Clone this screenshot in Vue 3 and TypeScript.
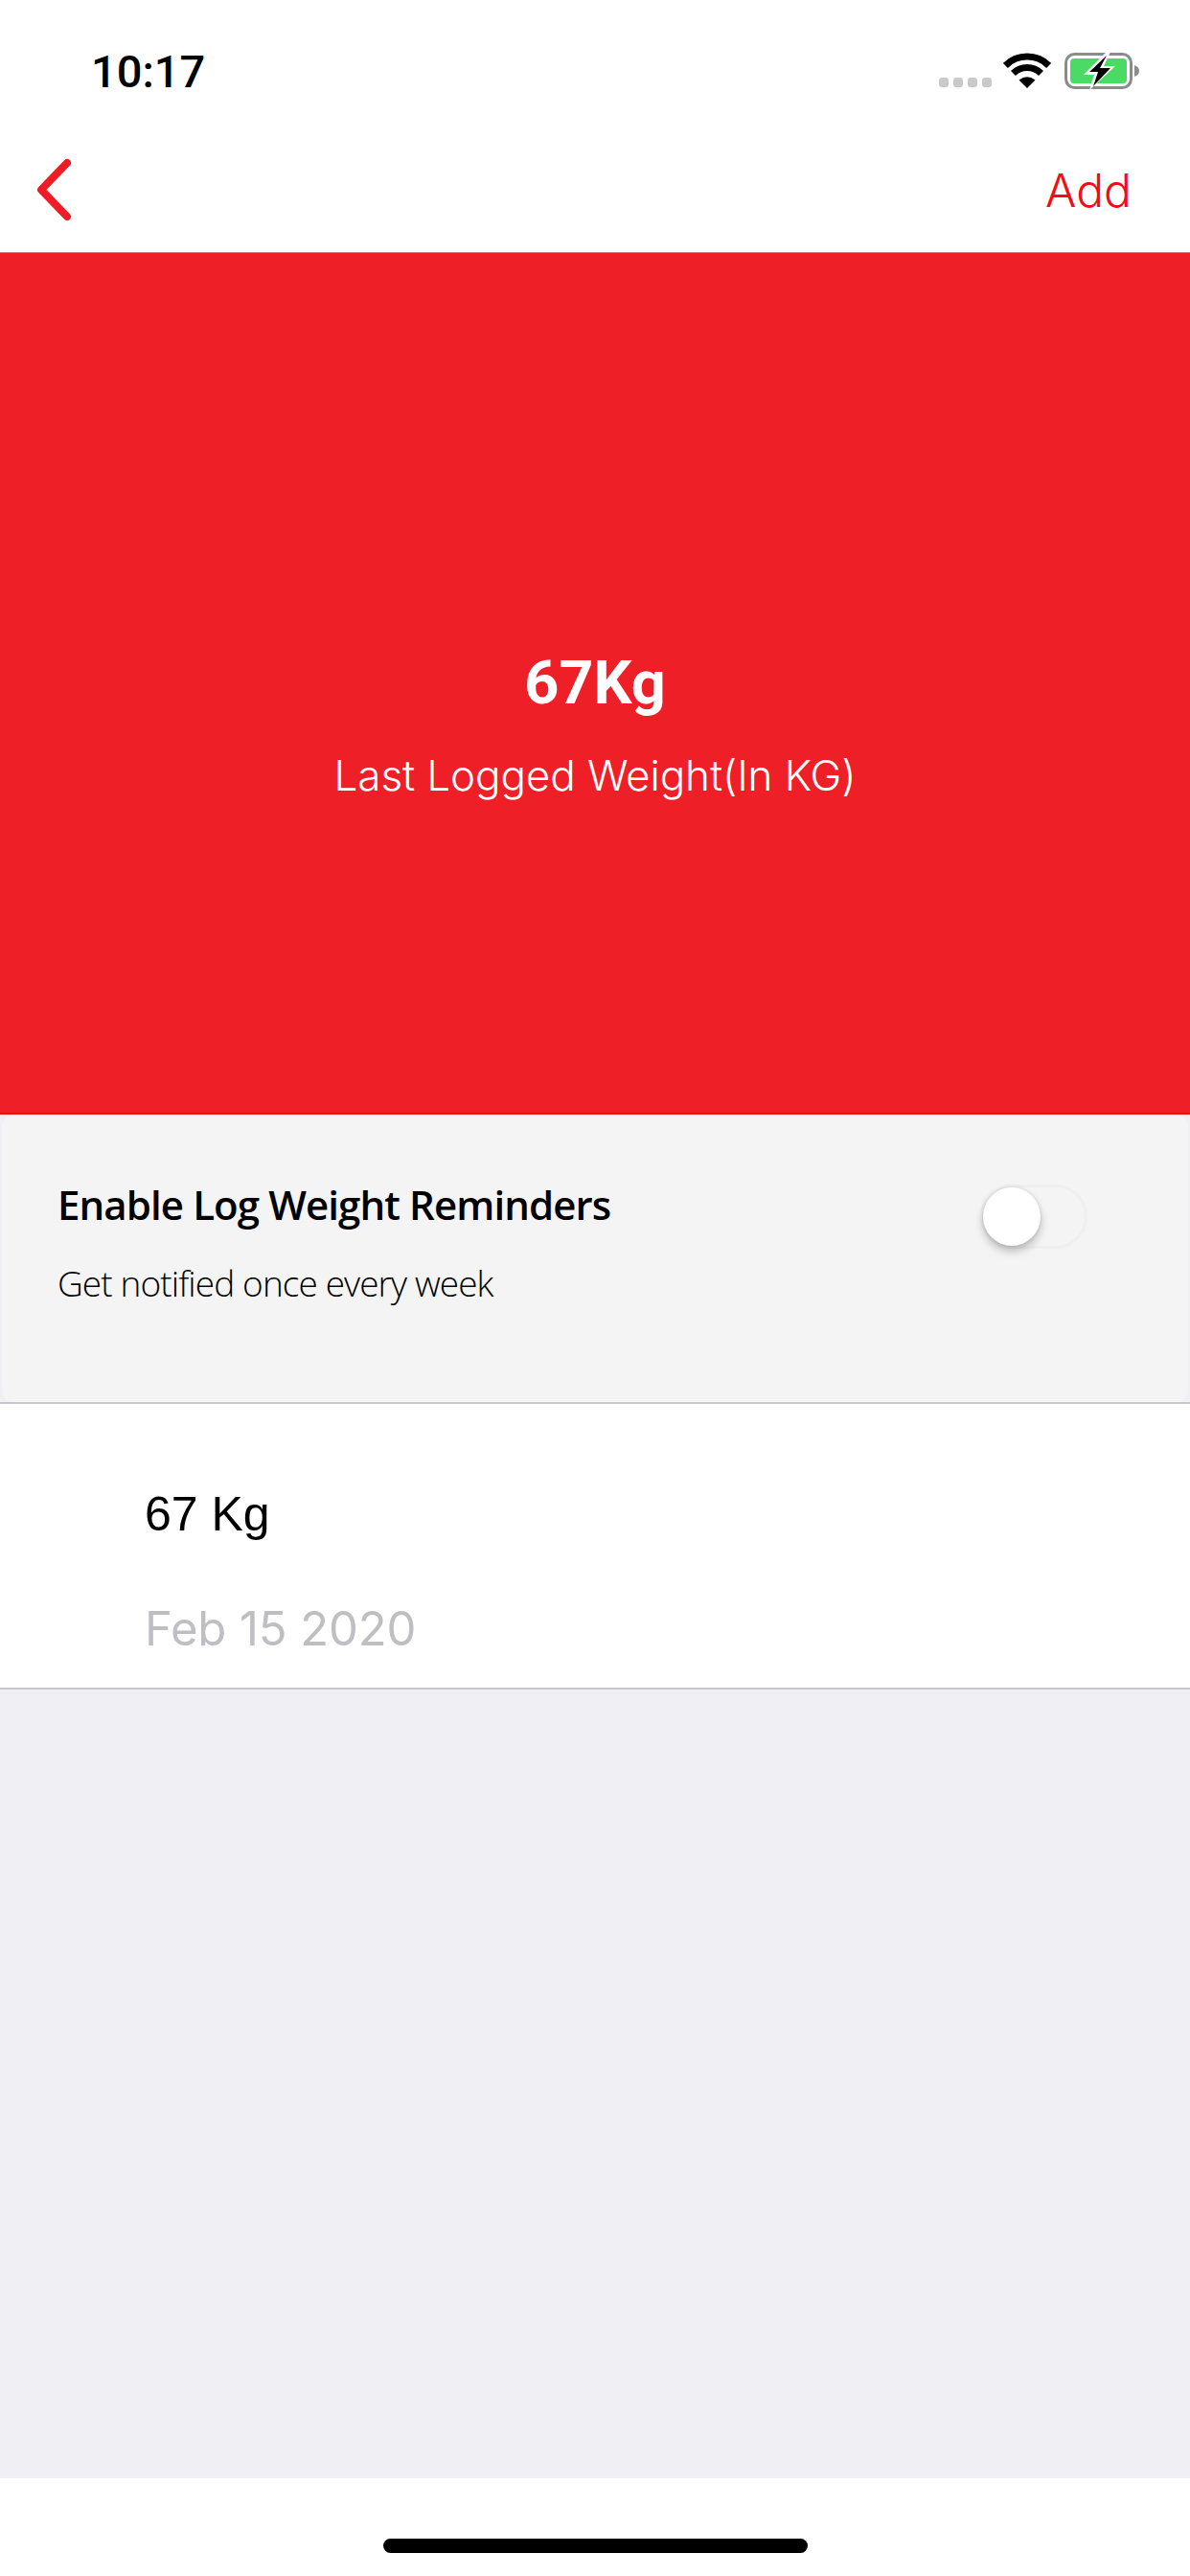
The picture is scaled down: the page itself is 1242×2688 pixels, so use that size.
<script setup lang="ts">
const weight = { value: '67Kg', label: 'Last Logged Weight(In KG)' }
const entries = [{ kg: '67 Kg', date: 'Feb 15 2020' }]
</script>

<template>
  <div class="screen">
    <div class="status">
      <span class="time">10:17</span>
      <div class="status-icons">
        <div class="dots"><i></i><i></i><i></i><i></i></div>
        <svg class="wifi" width="50" height="37" viewBox="0 0 50 37">
          <path d="M2.4 13.4A32 32 0 0 1 47.6 13.4" fill="none" stroke="#000" stroke-width="7" />
          <path d="M10.5 21.5A20.5 20.5 0 0 1 39.5 21.5" fill="none" stroke="#000" stroke-width="7" />
          <path d="M25 37L16.5 28.5Q25 22 33.5 28.5Z" fill="#000" />
        </svg>
        <svg class="battery" width="80" height="38" viewBox="0 0 80 38">
          <rect x="1.5" y="1.5" width="68" height="35" rx="9" fill="#fff" stroke="#8b8b8b" stroke-width="3" />
          <rect x="6" y="6" width="59" height="26" rx="4" fill="#4cd964" />
          <path d="M73 13C76 14 78 16 78 19C78 22 76 24 73 25Z" fill="#8b8b8b" />
          <path d="M44 -1L20 23H31L26 39L53 14H41L48 -1Z" fill="#fff" />
          <path d="M44 3L26 20H35L30 35L48 16H37Z" fill="#000" />
        </svg>
      </div>
    </div>

    <header class="nav">
      <svg class="back" width="40" height="66" viewBox="0 0 40 66">
        <path d="M32 5L5 33L32 61" fill="none" stroke="#ef1c25" stroke-width="8" stroke-linecap="round" stroke-linejoin="round" />
      </svg>
      <span class="add">Add</span>
    </header>

    <section class="hero">
      <div class="hero-value">{{ weight.value }}</div>
      <div class="hero-label">{{ weight.label }}</div>
    </section>

    <main class="content">
      <section class="card">
        <div class="card-text">
          <div class="card-title">Enable Log Weight Reminders</div>
          <div class="card-sub">Get notified once every week</div>
        </div>
        <div class="toggle"><span class="thumb"></span></div>
      </section>

      <div class="list">
        <div v-for="entry in entries" :key="entry.date" class="row">
          <div class="row-kg">{{ entry.kg }}</div>
          <div class="row-date">{{ entry.date }}</div>
        </div>
      </div>
    </main>

    <footer class="home"><span class="home-bar"></span></footer>
  </div>
</template>

<style scoped>
.screen {
  width: 1242px;
  height: 2688px;
  display: flex;
  flex-direction: column;
  background: #fff;
  font-family: Inter, Roboto, "Liberation Sans", sans-serif;
  overflow: hidden;
}
.status {
  height: 132px;
  box-sizing: border-box;
  display: flex;
  justify-content: space-between;
  align-items: flex-start;
  padding: 0 51px 0 95px;
}
.time {
  margin-top: 47px;
  font-family: Roboto, sans-serif;
  font-size: 47px;
  line-height: 56px;
  font-weight: 500;
  color: #000;
}
.status-icons {
  display: flex;
  align-items: flex-end;
  margin-top: 55px;
  height: 38px;
}
.dots {
  display: flex;
  gap: 5px;
  margin-bottom: 2px;
  margin-left: 3px;
}
.dots i {
  width: 10px;
  height: 10px;
  border-radius: 3px;
  background: #c9c9c9;
}
.wifi {
  margin-left: 12px;
  margin-bottom: 1px;
}
.battery {
  margin-left: 14px;
}
.nav {
  height: 132px;
  box-sizing: border-box;
  border-bottom: 1px solid #9c8f8f;
  display: flex;
  align-items: center;
  justify-content: space-between;
  padding: 0 61px 0 38px;
}
.add {
  font-size: 48px;
  line-height: 56px;
  margin-top: 2px;
  font-weight: 300;
  color: #f40b14;
}
.hero {
  height: 899px;
  box-sizing: border-box;
  background: #ef1f27;
  border-bottom: 2px solid #f00d14;
  color: #fff;
  display: flex;
  flex-direction: column;
  align-items: center;
  padding-top: 413px;
}
.hero-value {
  font-family: Roboto, sans-serif;
  font-size: 63px;
  line-height: 72px;
  font-weight: 700;
}
.hero-label {
  margin-top: 35px;
  font-size: 44px;
  line-height: 50px;
  font-weight: 300;
  letter-spacing: -0.1px;
}
.content {
  flex: 1;
  background: #efeff4;
}
.card {
  height: 300px;
  box-sizing: border-box;
  margin: 0 2px;
  padding: 0 0 0 58px;
  background: #f4f4f4;
  border-radius: 12px;
  display: flex;
  justify-content: space-between;
  align-items: flex-start;
}
.card-text {
  padding-top: 69px;
  font-family: "Open Sans", "Noto Sans", sans-serif;
  color: #000;
}
.card-title {
  font-size: 42px;
  line-height: 50px;
  font-weight: 600;
  letter-spacing: -0.9px;
}
.card-sub {
  margin-top: 34px;
  font-size: 37px;
  line-height: 46px;
  font-weight: 300;
  letter-spacing: -0.9px;
}
.toggle {
  position: relative;
  width: 112px;
  height: 67px;
  box-sizing: border-box;
  margin: 73px 105px 0 0;
  border: 3px solid #efefef;
  border-radius: 34px;
}
.thumb {
  position: absolute;
  left: 0;
  top: 0;
  width: 60px;
  height: 61px;
  border-radius: 50%;
  background: #fff;
  box-shadow: 0 6px 10px rgba(0, 0, 0, 0.22), 0 0 4px rgba(0, 0, 0, 0.12);
}
.list {
  border-top: 2px solid #c8c7cc;
  border-bottom: 2px solid #c8c7cc;
  background: #fff;
}
.row {
  height: 296px;
  box-sizing: border-box;
  padding: 0 0 0 151px;
}
.row-kg {
  padding-top: 87px;
  font-family: "Liberation Sans", Arimo, sans-serif;
  font-size: 50px;
  line-height: 56px;
  color: #000;
}
.row-date {
  margin-top: 64px;
  font-size: 49px;
  line-height: 56px;
  font-weight: 400;
  letter-spacing: -0.1px;
  color: #bfbfc3;
}
.home {
  height: 102px;
  background: #fff;
  display: flex;
  justify-content: center;
  padding-top: 63px;
  box-sizing: border-box;
}
.home-bar {
  width: 443px;
  height: 15px;
  border-radius: 8px;
  background: #000;
}
</style>
